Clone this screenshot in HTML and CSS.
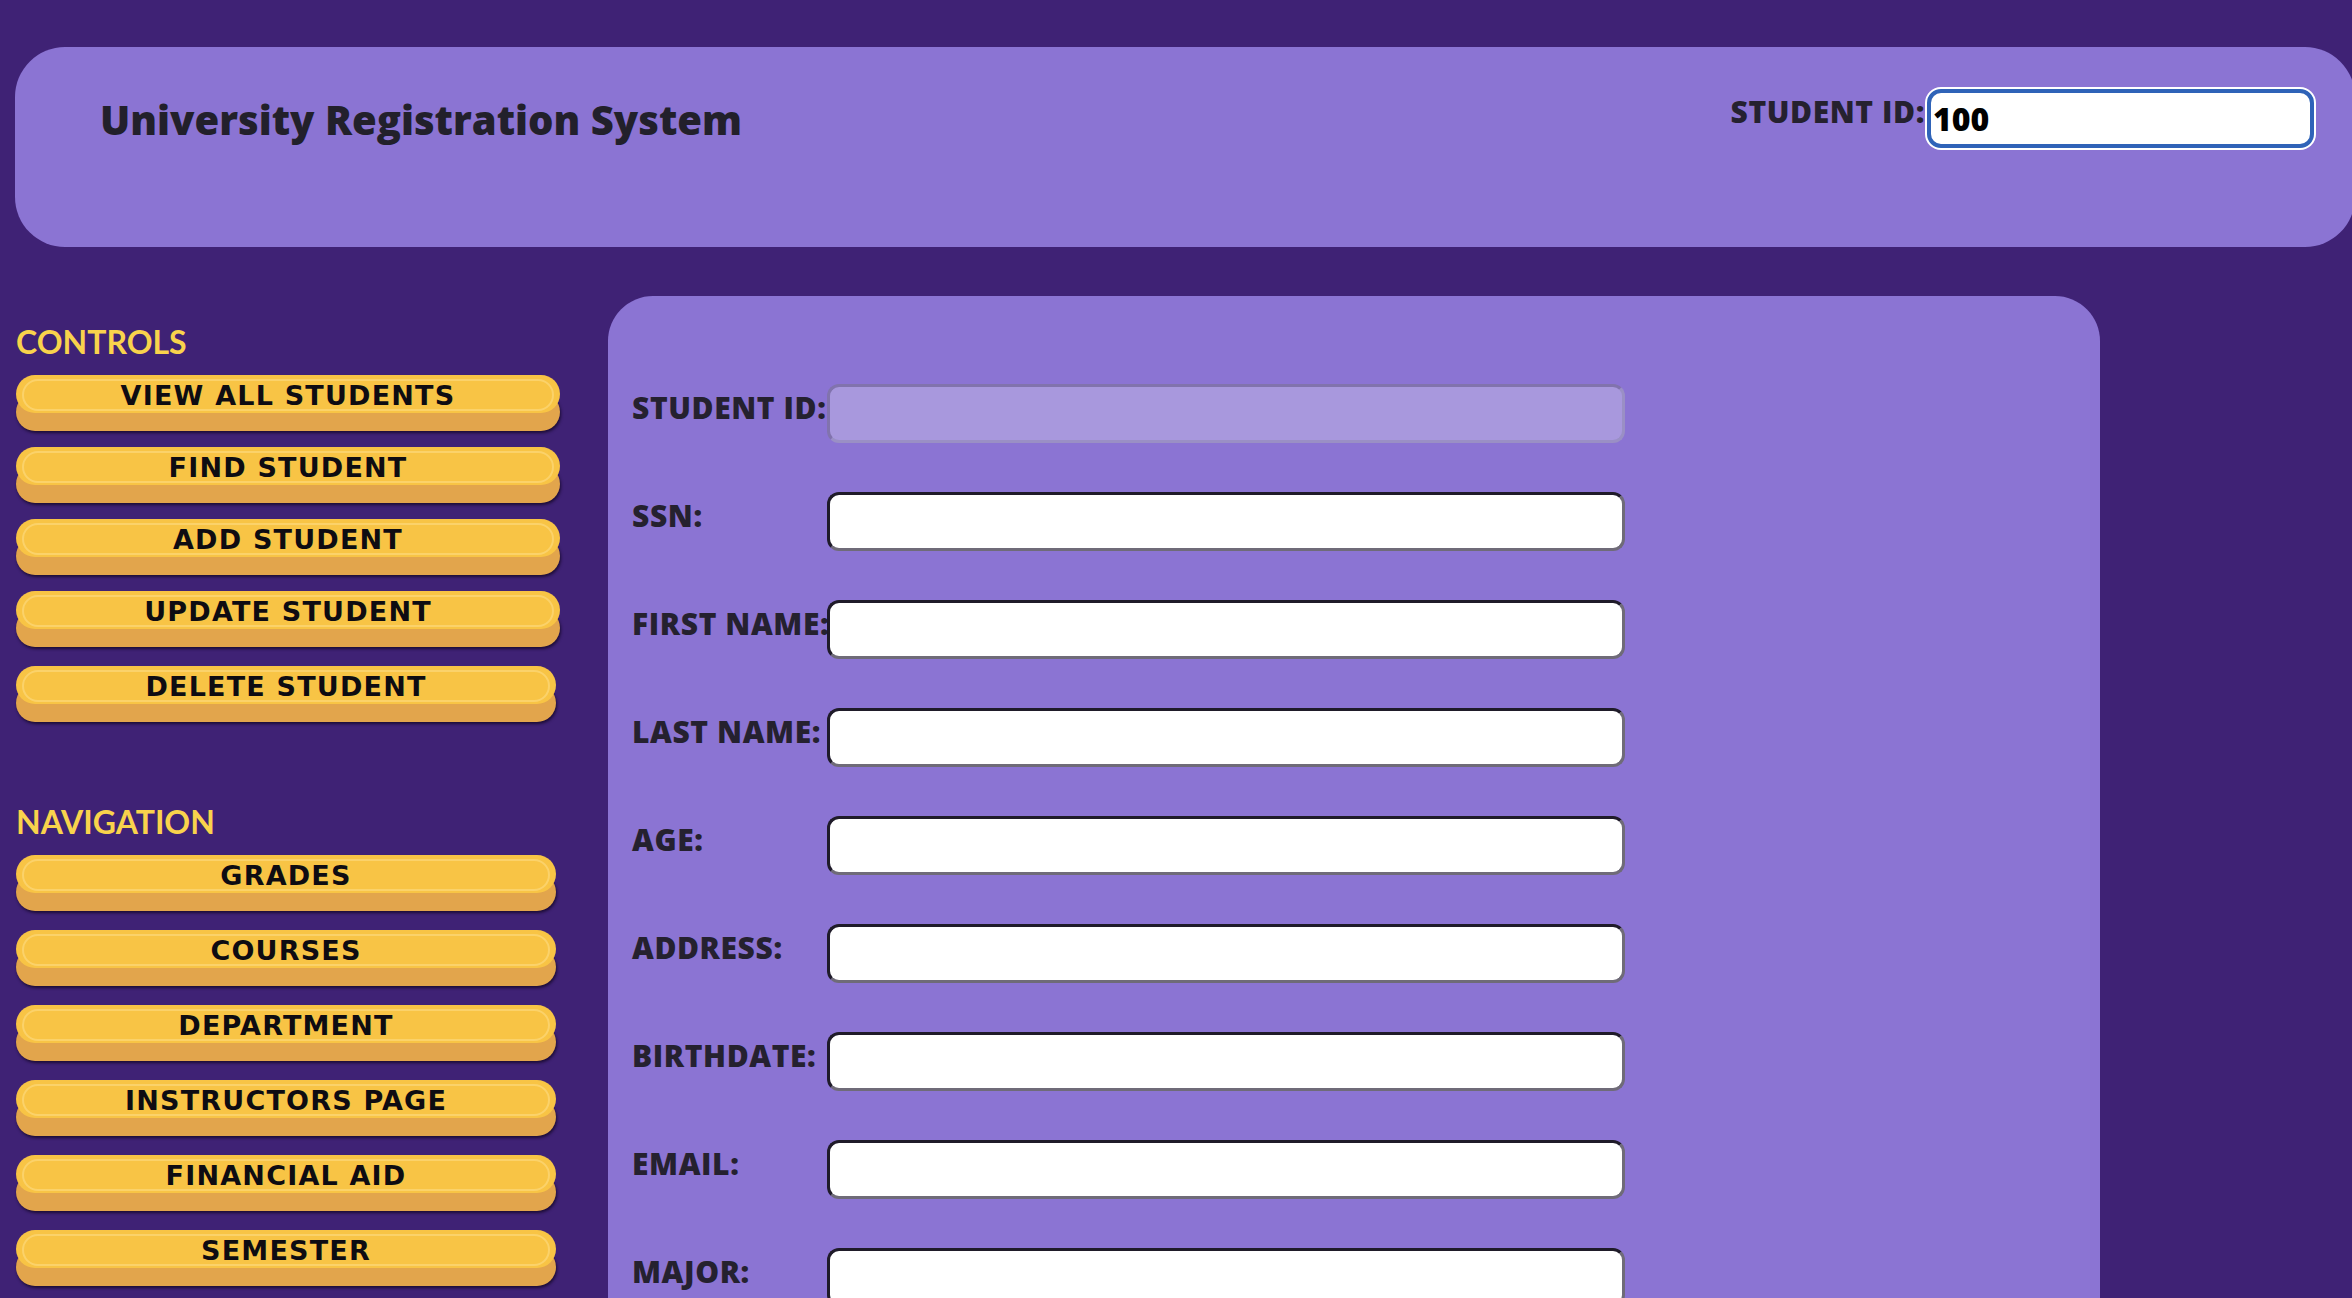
FILE: index.html
```html
<!DOCTYPE html>
<html lang="en">
<head>
<meta charset="utf-8">
<title>University Registration System</title>
<link rel="stylesheet" href="styles.css">
</head>
<body>
<header class="topbar">
  <h1 class="title">University Registration System</h1>
  <div class="search">
    <label class="field-label" for="searchId">STUDENT ID:</label>
    <input class="search-input" id="searchId" type="text" value="100">
  </div>
</header>
<div class="layout">
  <aside class="sidebar">
    <h2 class="side-heading">CONTROLS</h2>
    <div class="btn-stack btn-stack--tight">
      <button class="btn btn--wide">VIEW ALL STUDENTS</button>
      <button class="btn btn--wide">FIND STUDENT</button>
      <button class="btn btn--wide">ADD STUDENT</button>
      <button class="btn btn--wide">UPDATE STUDENT</button>
    </div>
    <button class="btn btn--delete">DELETE STUDENT</button>
    <h2 class="side-heading side-heading--nav">NAVIGATION</h2>
    <div class="btn-stack">
      <button class="btn">GRADES</button>
      <button class="btn">COURSES</button>
      <button class="btn">DEPARTMENT</button>
      <button class="btn">INSTRUCTORS PAGE</button>
      <button class="btn">FINANCIAL AID</button>
      <button class="btn">SEMESTER</button>
    </div>
  </aside>
  <main class="panel">
    <form class="student-form">
      <label class="field-label form-label">STUDENT ID:</label>
      <input class="text-input text-input--disabled" type="text" disabled>
      <label class="field-label form-label">SSN:</label>
      <input class="text-input" type="text">
      <label class="field-label form-label">FIRST NAME:</label>
      <input class="text-input" type="text">
      <label class="field-label form-label">LAST NAME:</label>
      <input class="text-input" type="text">
      <label class="field-label form-label">AGE:</label>
      <input class="text-input" type="text">
      <label class="field-label form-label">ADDRESS:</label>
      <input class="text-input" type="text">
      <label class="field-label form-label">BIRTHDATE:</label>
      <input class="text-input" type="text">
      <label class="field-label form-label">EMAIL:</label>
      <input class="text-input" type="text">
      <label class="field-label form-label">MAJOR:</label>
      <input class="text-input" type="text">
    </form>
  </main>
</div>
</body>
</html>
```
FILE: styles.css
```css
html {
  overflow: hidden;
}
body {
  margin: 0;
  background: #3f2275;
  font-family: "Open Sans", Lato, sans-serif;
  color: #24202e;
}

.topbar {
  margin: 47px 0 0 15px;
  width: 2340px;
  height: 200px;
  box-sizing: border-box;
  padding: 42px 41px 0 85px;
  background: #8b74d3;
  border-radius: 50px;
  display: flex;
  justify-content: space-between;
  align-items: flex-start;
}
.title {
  margin: 0;
  padding-top: 3px;
  font-family: "Open Sans", Lato, sans-serif;
  font-size: 40px;
  font-weight: 800;
  letter-spacing: 0;
  line-height: normal;
  color: #22202b;
}
.search {
  display: flex;
  align-items: flex-start;
}
.field-label {
  font-family: "Open Sans", Lato, sans-serif;
  font-size: 30px;
  font-weight: 800;
  letter-spacing: 0.6px;
  line-height: normal;
  color: #25212f;
  white-space: nowrap;
}
.search .field-label {
  margin-top: 2px;
  margin-right: 2px;
}
.search-input {
  width: 387px;
  height: 59px;
  box-sizing: border-box;
  border: 4px solid #2f63b8;
  border-radius: 14px;
  box-shadow: 0 0 0 2px #ffffff;
  outline: none;
  background: #ffffff;
  padding: 0 2px;
  font-family: "Open Sans", Lato, sans-serif;
  font-size: 32px;
  font-weight: 800;
  color: #000;
}

.layout {
  display: flex;
  align-items: flex-start;
  margin-top: 49px;
}
.sidebar {
  margin-left: 16px;
  width: 544px;
  padding-top: 26px;
  flex: none;
}
.side-heading {
  margin: 0 0 14px;
  font-family: Lato, "Open Sans", sans-serif;
  font-size: 32px;
  font-weight: 700;
  line-height: normal;
  color: #f9d34c;
}
.side-heading--nav {
  margin-top: 98px;
}
.btn-stack {
  display: flex;
  flex-direction: column;
  gap: 37px;
}
.btn-stack--tight {
  gap: 34px;
}
.btn {
  position: relative;
  display: block;
  width: 540px;
  height: 38px;
  padding: 0;
  border: 0;
  border-radius: 19px;
  background: #f8c445;
  box-shadow: 0 18px 0 #e2a54c, 1px 20px 3px rgba(22, 8, 44, 0.85);
  font-family: "DejaVu Sans", Verdana, sans-serif;
  font-size: 27px;
  font-weight: 700;
  letter-spacing: 1.2px;
  line-height: 42px;
  color: #0e0c12;
  text-align: center;
  cursor: pointer;
}
.btn::before {
  content: "";
  position: absolute;
  top: 4px;
  left: 6px;
  right: 6px;
  bottom: 2px;
  border: 2px solid #fbd26a;
  border-radius: 16px;
}
.btn--wide {
  width: 544px;
}
.btn--delete {
  margin-top: 37px;
}

.panel {
  margin-left: 48px;
  width: 1492px;
  flex: none;
  box-sizing: border-box;
  padding: 88px 0 200px 24px;
  background: #8b74d3;
  border-radius: 45px 45px 0 0;
}
.student-form {
  display: grid;
  grid-template-columns: 195px 798px;
  row-gap: 49px;
  align-items: center;
}
.form-label {
  padding-bottom: 12px;
}
.text-input {
  display: block;
  width: 798px;
  height: 59px;
  box-sizing: border-box;
  border-style: solid;
  border-width: 3px;
  border-color: #1f1b29 #6f6b78 #6f6b78 #1f1b29;
  border-radius: 12px;
  background: #ffffff;
  padding: 0 8px;
  font-family: "Open Sans", sans-serif;
  font-size: 28px;
}
.text-input--disabled {
  background: #a898dd;
  border-color: #8173ad #9a8fc5 #9a8fc5 #8173ad;
}
```
